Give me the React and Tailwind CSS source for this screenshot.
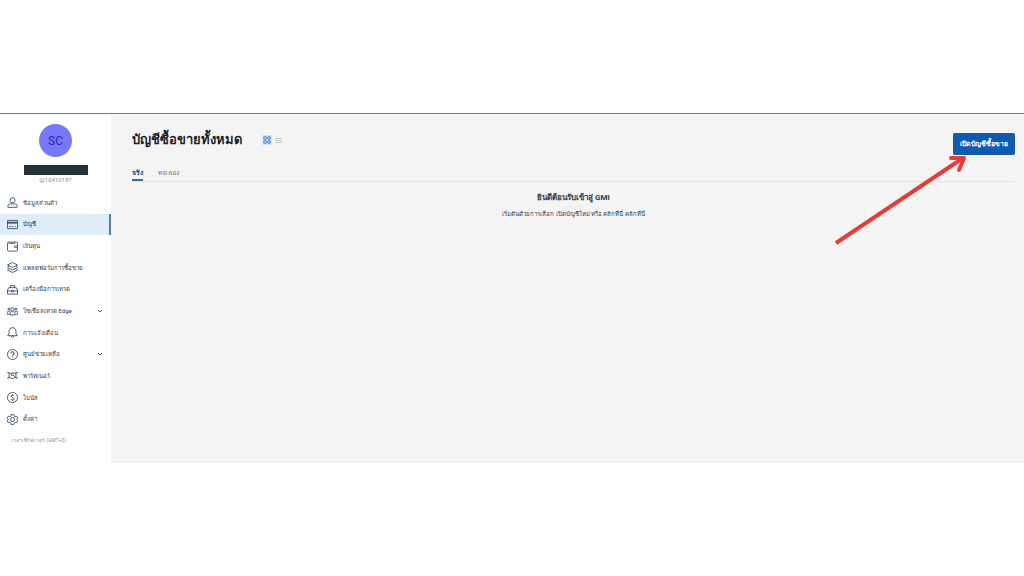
import { useState } from "react";

const iconPaths = {
  profile: (
    <>
      <circle cx="12" cy="7" r="5.5" />
      <path d="M2 22.500v-3c0-3 2-4.500 5-4.500h10c3 0 5 1.500 5 4.500v3z" />
    </>
  ),
  accounts: (
    <>
      <rect x="1" y="3" width="22" height="18" rx="1" />
      <path d="M1 8h22" strokeWidth="4" />
      <path d="M5 16.500h4M11 16.500h3M17 16.500h2" />
    </>
  ),
  wallet: (
    <>
      <rect x="1" y="2.500" width="22" height="19.500" rx="2.500" />
      <path d="M3 5h15M22 10.500h-4a2 2 0 0 0 0 4h4" />
    </>
  ),
  platforms: (
    <>
      <path d="M12 1 23 6.500 12 12 1 6.500z" />
      <path d="M4 9 1 12l11 5.500L23 12l-3-3" />
      <path d="M4 14.500 1 17.500 12 23l11-5.500-3-3" />
    </>
  ),
  tools: (
    <>
      <path d="M1 13 4 8h16l3 5v9H1z" />
      <path d="M7.500 8V3.500h9V8M1 15h22M9.500 13v4h5v-4" />
    </>
  ),
  social: (
    <>
      <circle cx="12" cy="7.500" r="3.500" />
      <circle cx="4.500" cy="6.500" r="2.200" />
      <circle cx="19.500" cy="6.500" r="2.200" />
      <path d="M6.500 19.500V16c0-2 1.500-3.500 3.500-3.500h4c2 0 3.500 1.500 3.500 3.500v3.500z" />
      <path d="M7 11.500H3C1.500 11.500.5 12.500.5 14v4h5M17 11.500h4c1.500 0 2.500 1 2.500 2.500v4h-5" />
    </>
  ),
  bell: (
    <>
      <path d="M12 1.500c-4.500 0-7.500 3-7.500 7.500v5.500l-3 4.500h21l-3-4.500V9c0-4.500-3-7.500-7.500-7.500z" />
      <path d="M9 19.500c0 4 6 4 6 0" />
    </>
  ),
  help: (
    <>
      <circle cx="12" cy="12" r="11" />
      <path d="M8.500 9.500c0-4.500 7-4.500 7 0 0 2.500-3.500 2.500-3.500 5M12 16.500v2" strokeWidth="2.200" />
    </>
  ),
  partner: (
    <>
      <path d="M.5 5.500h4v12h-4M23.500 5.500h-4v12h4M5 7h14" />
      <path d="M12 7.500 9 11.500c1.500 1.500 3 .5 4-.5l5.500 4.500M5 15l5 3.500h4l4.500-3" />
    </>
  ),
  bonus: (
    <>
      <circle cx="12" cy="12" r="11" />
      <path d="M15.500 9c-.5-3-7-3-7 0s7 3 7 6-6.500 3-7 0M12 4.500v3M12 16.500v3" />
    </>
  ),
  settings: (
    <>
      <path d="M9.300 1h5.400l.8 3.500 2.300 1.300 3.300-1 2.600 4.500-2.500 2.400v.6l2.500 2.400-2.600 4.500-3.300-1-2.300 1.300-.8 3.500H9.300l-.8-3.500-2.300-1.300-3.300 1L.3 14.700l2.500-2.400v-.6L.3 9.300l2.600-4.500 3.300 1 2.300-1.300z" />
      <circle cx="12" cy="12" r="4.500" />
    </>
  ),
};

const menu = [
  { id: "profile", label: "ข้อมูลส่วนตัว" },
  { id: "accounts", label: "บัญชี" },
  { id: "wallet", label: "เงินทุน" },
  { id: "platforms", label: "แพลตฟอร์มการซื้อขาย" },
  { id: "tools", label: "เครื่องมือการเทรด" },
  { id: "social", label: "โซเชี่ยลเทรด Edge", expandable: true },
  { id: "bell", label: "การแจ้งเตือน" },
  { id: "help", label: "ศูนย์ช่วยเหลือ", expandable: true },
  { id: "partner", label: "พาร์ทเนอร์" },
  { id: "bonus", label: "โบนัส" },
  { id: "settings", label: "ตั้งค่า" },
];

const tabs = [
  { id: "real", label: "จริง" },
  { id: "demo", label: "ทดลอง" },
];

function Sidebar() {
  return (
    <aside className="w-[111px] shrink-0 bg-white pt-2.5 pb-[19px]">
      <div className="flex flex-col items-center">
        <div className="flex size-[33px] items-center justify-center rounded-full bg-[#7678f8] text-xs text-[#2925b5]">
          SC
        </div>
        <div className="mt-2 h-[10px] w-[64px] bg-[#263238]" />
        <p className="mt-px text-[6px] leading-[8px] text-[#8b8f98]">@10410187</p>
      </div>

      <nav className="mt-2 flex h-[238px] flex-col">
        {menu.map((item) => {
          const active = item.id === "accounts";

          return (
            <a
              key={item.id}
              href={`#${item.id}`}
              className={`flex flex-1 items-center border-r-2 pr-1.5 pl-[7px] text-[6px] leading-[10px] whitespace-nowrap
                ${active
                  ? "border-[#4f809c] bg-[#deedf8] text-[#1f2a3c]"
                  : "border-transparent text-[#343a4a]"
                }`}
            >
              <svg
                viewBox="0 0 24 24"
                className="mr-[5px] size-[11px] shrink-0 fill-none stroke-[#3c5268] stroke-2"
                aria-hidden="true"
              >
                {iconPaths[item.id]}
              </svg>
              <span className="flex-1">{item.label}</span>
              {item.expandable && (
                <svg viewBox="0 0 6 6" className="size-[6px] fill-none stroke-[#4f5d70]">
                  <path d="M1 2l2 2 2-2" />
                </svg>
              )}
            </a>
          );
        })}
      </nav>

      <p className="mt-1.5 pl-[11px] text-[5px] leading-[8px] text-[#8d93a3]">
        เวลาเซิร์ฟเวอร์ (GMT+3)
      </p>
    </aside>
  );
}

export default function App() {
  const [tab, setTab] = useState("real");

  return (
    <div
      lang="th"
      className="min-h-screen bg-white pt-[113px] font-['Roboto','Noto_Sans','DejaVu_Sans',sans-serif]"
    >
      <div className="flex border-t border-[#77727a]">
        <Sidebar />

        <main className="relative min-w-0 flex-1 bg-[#f4f4f4] pt-[14px] pr-[9px] pl-[21px]">
          {/* Title row */}
          <div className="flex items-start justify-between">
            <div className="flex h-6 items-center gap-5">
              <h1 className="text-[13px] leading-6 font-bold text-[#1b1f29]">
                บัญชีซื้อขายทั้งหมด
              </h1>
              <div className="flex items-center gap-[3px]">
                <button type="button" aria-label="Grid view" className="bg-[#d3e6f7] p-px">
                  <svg viewBox="0 0 8 8" className="size-[8px] fill-none stroke-[#3478b4]">
                    <path
                      d="M.8.800h2.400v2.400H.8zM4.800.800h2.400v2.400H4.800zM.8 4.800h2.400v2.400H.8zM4.800 4.800h2.400v2.400H4.800z"
                      strokeWidth=".8"
                    />
                  </svg>
                </button>
                <button type="button" aria-label="List view">
                  <svg viewBox="0 0 7 7" className="size-[7px] stroke-[#b8bcc0]">
                    <path d="M0 1.500h7M0 3.500h7M0 5.500h7" strokeWidth=".8" />
                  </svg>
                </button>
              </div>
            </div>

            <button
              type="button"
              className="mt-[5px] h-[22px] rounded-[2px] bg-[#1159af] px-[7px] text-[7px] font-bold text-white"
            >
              เปิดบัญชีซื้อขาย
            </button>
          </div>

          {/* Account type tabs */}
          <div className="mt-3 flex gap-[15px] border-b border-[#e0e3e5]" role="tablist">
            {tabs.map((item) => (
              <button
                key={item.id}
                type="button"
                role="tab"
                aria-selected={tab === item.id}
                onClick={() => setTab(item.id)}
                className={`h-[14px] border-b-2 pb-px text-[7px] leading-[10px]
                  ${tab === item.id
                    ? "border-[#386f9c] font-bold text-[#23568c]"
                    : "border-transparent text-[#767c84]"
                  }`}
              >
                {item.label}
              </button>
            ))}
          </div>

          {/* Empty state */}
          <div className="mt-2.5 text-center text-[#343a4a]">
            <p className="text-[8px] leading-3 font-bold">ยินดีต้อนรับเข้าสู่ GMI</p>
            <p className="mt-1 text-[6px] leading-3">
              เริ่มต้นด้วยการเลือก เปิดบัญชีใหม่ หรือ คลิกที่นี่ คลิกที่นี่
            </p>
          </div>

          {/* Pointer to the open account button */}
          <svg
            viewBox="0 0 136 94"
            className="pointer-events-none absolute top-[39px] right-[56px] h-[94px] w-[136px] fill-none stroke-[#e53e3a]"
            aria-hidden="true"
          >
            <path d="M4 90 131 5" strokeWidth="4" />
            <path d="M119 5h13l-5 12" strokeWidth="4" strokeLinecap="round" strokeLinejoin="round" />
          </svg>
        </main>
      </div>
    </div>
  );
}
